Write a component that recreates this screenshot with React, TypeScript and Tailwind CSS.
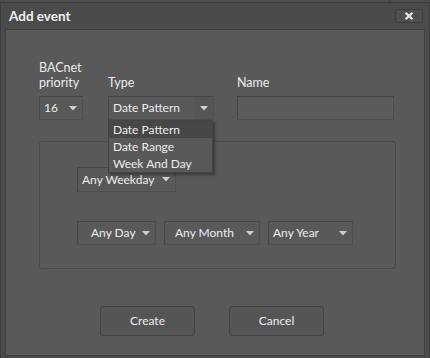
import React from "react";

const Caret = () => (
  <svg width="8" height="5" viewBox="0 0 8 5" className="shrink-0">
    <path d="M0 0h8L4 4.5z" fill="#cfcfcf" />
  </svg>
);

const Select = ({
  label,
  className,
  padLeft = "pl-[4px]",
}: {
  label: string;
  className: string;
  padLeft?: string;
}) => (
  <div
    className={`flex items-center whitespace-nowrap border border-[#464646] border-b-[#4e4e4e] border-r-[#4e4e4e] bg-[#595959] text-[12px] text-[#ececec] ${className}`}
  >
    <span className={`flex-1 ${padLeft}`}>{label}</span>
    <span className="flex w-[18px] justify-center">
      <Caret />
    </span>
  </div>
);

export default function App() {
  return (
    <div
      className="relative h-[358px] w-[430px] overflow-hidden bg-[#4d4d4d]"
      style={{ fontFamily: "Lato, 'Open Sans', sans-serif" }}
    >
      {/* window behind */}
      <div className="flex h-[3px] border-b border-[#3c3c3c]">
        <div className="w-[390px] border-r border-[#3c3c3c]" />
      </div>

      <div className="flex h-[355px] flex-col border-x border-[#3c3c3c] bg-[#4b4b4b] px-[4px] pb-[2px]">
        {/* title bar */}
        <div className="flex h-[26px] items-center justify-between pl-[4px] pr-[2px]">
          <span className="text-[13.5px] font-bold text-[#f2f2f2]">Add event</span>
          <button className="flex h-[14px] w-[28px] items-center justify-center rounded-[3px] border border-[#3e3e3e] bg-[#4e4e4e]">
            <svg width="10" height="8" viewBox="0 0 10 8">
              <path d="M1.5 0.8L8.5 7.2M8.5 0.8L1.5 7.2" stroke="#e6e6e6" strokeWidth="2.2" />
            </svg>
          </button>
        </div>

        {/* content */}
        <div className="relative flex flex-1 flex-col border border-[#404040] bg-[#595959] pl-[33px] pr-[30px] pt-[30px]">
          <div className="flex items-end">
            <div className="flex w-[70px] flex-col">
              <span className="text-[12.5px] leading-[15px] text-[#ececec]">
                BACnet
                <br />
                priority
              </span>
              <Select label="16" className="mt-[6px] h-[24px] w-[44px]" />
            </div>
            <div className="relative flex w-[131px] flex-col">
              <span className="text-[12.5px] leading-[15px] text-[#ececec]">Type</span>
              <div className="mt-[6px] flex h-[24px] w-[106px] items-center whitespace-nowrap border border-[#464646] border-b-[#4e4e4e] border-r-[#4e4e4e] bg-[#595959] text-[12px] text-[#ececec]">
                <span className="flex-1 pl-[4px]">Date Pattern</span>
                <span className="flex h-full w-[18px] items-center justify-center bg-[#555555]">
                  <Caret />
                </span>
              </div>
              {/* dropdown menu */}
              <div className="absolute left-0 top-[45px] z-10 flex w-[105px] flex-col whitespace-nowrap border border-[#444444] bg-[#595959] text-[12px] leading-[17px] text-[#ececec] shadow-[2px_2px_2px_rgba(0,0,0,0.35)]">
                <span className="bg-[#474747] pl-[4px]">Date Pattern</span>
                <span className="pl-[4px]">Date Range</span>
                <span className="pl-[4px]">Week And Day</span>
              </div>
            </div>
            <div className="flex flex-1 flex-col">
              <span className="text-[12.5px] leading-[15px] text-[#ececec]">Name</span>
              <div className="mt-[6px] h-[24px] w-[157px] border border-[#464646] border-b-[#4e4e4e] border-r-[#4e4e4e] bg-[#5b5b5b]" />
            </div>
          </div>

          {/* group box */}
          <div className="mt-[21px] flex h-[128px] w-[357px] flex-col rounded-[3px] border border-[#4a4a4a] pl-[37px] pt-[25px]">
            <Select label="Any Weekday" className="h-[25px] w-[99px]" />
            <div className="mt-[29px] flex gap-[8px]">
              <Select label="Any Day" padLeft="pl-[13px]" className="h-[24px] w-[79px]" />
              <Select label="Any Month" padLeft="pl-[10px]" className="h-[24px] w-[96px]" />
              <Select label="Any Year" className="h-[24px] w-[85px]" />
            </div>
          </div>

          {/* buttons */}
          <div className="mt-[37px] flex gap-[34px] pl-[61px]">
            <button className="h-[30px] w-[95px] rounded-[3px] border border-[#444444] bg-[#555555] text-[12px] text-[#ececec]">
              Create
            </button>
            <button className="h-[30px] w-[95px] rounded-[3px] border border-[#444444] bg-[#555555] text-[12px] text-[#ececec]">
              Cancel
            </button>
          </div>
        </div>
      </div>
    </div>
  );
}
